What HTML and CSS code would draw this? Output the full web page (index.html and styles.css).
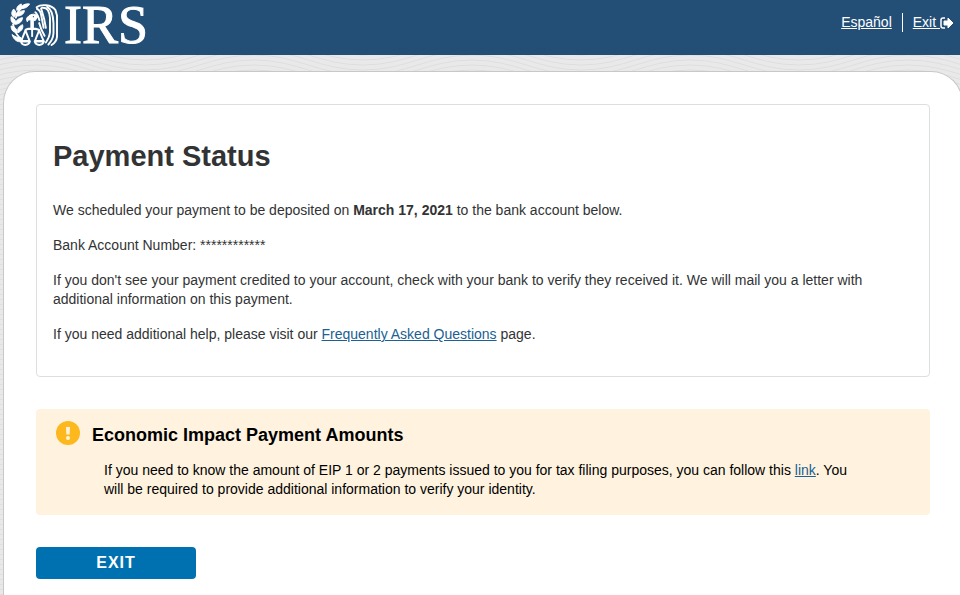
FILE: index.html
```html
<!DOCTYPE html>
<html lang="en">
<head>
<meta charset="utf-8">
<title>Payment Status</title>
<link rel="stylesheet" href="styles.css">
</head>
<body>
<svg class="wave-backdrop" aria-hidden="true">
  <defs>
    <pattern id="waves" x="36" y="0" width="218" height="5" patternUnits="userSpaceOnUse">
      <g fill="none" stroke="#dedede">
        <path d="M0-20C44-20 65 0 109 0S174-20 218-20"/>
        <path d="M0-15C44-15 65 5 109 5S174-15 218-15"/>
        <path d="M0-10C44-10 65 10 109 10S174-10 218-10"/>
        <path d="M0-5C44-5 65 15 109 15S174-5 218-5"/>
        <path d="M0 0C44 0 65 20 109 20S174 0 218 0"/>
        <path d="M0 5C44 5 65 25 109 25S174 5 218 5"/>
      </g>
    </pattern>
  </defs>
  <rect width="100%" height="100%" fill="url(#waves)"/>
</svg>
<header class="site-header">
  <div class="brand">
    <svg class="emblem" viewBox="0 0 156 138" aria-hidden="true">
      <g fill="#fff" stroke="#fff" stroke-width="3" stroke-linejoin="round">
        <path d="M35 3C25 7 19 14 21 23C31 20 37 12 35 3Z"/>
        <path d="M61 3C47 1 36 8 30 17C43 19 55 14 61 3Z"/>
        <path d="M11 19C3 29 3 37 12 45C21 35 19 27 11 19Z"/>
        <path d="M45 24C31 24 21 31 19 41C33 42 43 35 45 24Z"/>
        <path d="M3 43C1 56 6 64 16 67C20 57 14 48 3 43Z"/>
        <path d="M39 46C25 48 16 56 17 67C30 65 38 57 39 46Z"/>
        <path d="M3 72C3 85 10 93 23 93C22 82 14 74 3 72Z"/>
        <path d="M39 68C27 73 21 82 25 93C37 87 42 78 39 68Z"/>
        <path d="M6 99C11 115 22 124 36 121L33 109C24 109 16 106 6 99Z"/>
        <path d="M54 45C60 37 70 33 80 36L90 42L84 46L80 54L73 56V82H65V53H57L54 59C50 53 51 48 54 45Z"/>
      </g>
      <g fill="none" stroke="#fff" stroke-width="6" stroke-linejoin="round" stroke-linecap="round">
        <path d="M9 67C14 89 20 105 36 113"/>
        <path d="M18 46C21 27 34 13 54 6"/>
        <path d="M49 84L57 81H80L90 84" stroke-width="7"/>
        <path d="M69 81V104"/>
        <path d="M48 86L35 119H61Z"/><path d="M34 121C37 135 58 135 62 121Z"/>
        <path d="M91 86L78 119H105Z"/><path d="M77 121C81 135 102 135 106 121Z"/>
        <path d="M84 18C94 22 97 32 98 41L105 78M79 29C85 33 88 43 92 54"/>
        <path d="M97 17C102 33 108 48 112 78"/>
        <path d="M83 13C96 3 130 4 142 22L147 39V106C146 117 140 125 130 132"/>
        <path d="M100 15C118 13 123 27 125 47V91C124 106 118 115 112 124"/>
        <path d="M116 12C132 20 135 39 136 63V95C135 109 129 121 120 130"/>
        <path d="M91 63C95 79 101 91 108 103"/>
      </g>
      <circle cx="73" cy="43" r="2" fill="#234f77"/>
    </svg>
    <span class="brand-name">IRS</span>
  </div>
  <nav class="utility-nav" aria-label="Utility">
    <a class="utility-link" href="#">Español</a>
    <a class="utility-link utility-exit" href="#">Exit <svg class="exit-icon" viewBox="0 0 14 12" aria-hidden="true"><path d="M5 1H3Q1 1 1 3V9Q1 11 3 11H5" fill="none" stroke="#fff" stroke-width="1.5"/><path d="M4 4H8V1L13 6L8 11V8H4Z" fill="#fff" stroke="#fff" stroke-linejoin="round"/></svg></a>
  </nav>
</header>
<main class="page-card">
  <section class="status-panel">
    <h1>Payment Status</h1>
    <p>We scheduled your payment to be deposited on <strong>March 17, 2021</strong> to the bank account below.</p>
    <p>Bank Account Number: ************</p>
    <p>If you don't see your payment credited to your account, check with your bank to verify they received it. We will mail you a letter with additional information on this payment.</p>
    <p>If you need additional help, please visit our <a href="#">Frequently Asked Questions</a> page.</p>
  </section>
  <section class="notice">
    <svg class="notice-icon" viewBox="0 0 24 24" aria-hidden="true"><circle cx="12" cy="12" r="12" fill="#fdb81e"/><path d="M10 6H14L13.6 13.5H10.4Z" fill="#fff3df"/><circle cx="12" cy="17" r="2" fill="#fff3df"/></svg>
    <div class="notice-body">
      <h2>Economic Impact Payment Amounts</h2>
      <p>If you need to know the amount of EIP 1 or 2 payments issued to you for tax filing purposes, you can follow this <a href="#">link</a>. You will be required to provide additional information to verify your identity.</p>
    </div>
  </section>
  <button class="exit-button" type="button">EXIT</button>
</main>
</body>
</html>
```
FILE: styles.css
```css
* { box-sizing: border-box; }

body {
  position: relative;
  margin: 0;
  min-height: 100vh;
  overflow-x: hidden;
  color: #323334;
  font: 14px/19px "Liberation Sans", Arial, sans-serif;
  background: #e9e9e9;
}

a { color: #205f91; }

.wave-backdrop {
  position: absolute;
  inset: 0;
  z-index: -1;
  width: 100%;
  height: 100%;
}

.site-header {
  display: flex;
  justify-content: space-between;
  align-items: flex-start;
  height: 55px;
  padding: 0 6px 0 10px;
  background: #234f77;
  color: #fff;
}

.brand {
  display: flex;
  align-items: center;
  gap: 4px;
  height: 50px;
}

.emblem { width: 50px; height: 44px; }

.brand-name {
  font: 54px/55px "Liberation Serif", "Times New Roman", serif;
  -webkit-text-stroke: 1px #fff;
}

.utility-nav { display: flex; padding-top: 13px; }

.utility-link { color: #fff; line-height: 19px; }

.utility-exit {
  margin-left: 10px;
  padding-left: 10px;
  border-left: 1px solid #fff;
}

.exit-icon { width: 14px; height: 12px; vertical-align: -2px; }

.page-card {
  margin: 16px -3px 0 3px;
  padding: 32px 32px 16px;
  border: 1px solid #c8c8c8;
  border-bottom: 0;
  border-radius: 32px 32px 0 0;
  background: #fff;
}

.status-panel {
  padding: 32px 16px;
  border: 1px solid #dcdee0;
  border-radius: 4px;
}

.status-panel h1 {
  margin: 0 0 26px;
  font-size: 29px;
  line-height: 38px;
}

.status-panel p { margin: 0 0 16px; }

.status-panel p:last-child { margin: 0; }

.notice {
  display: flex;
  gap: 12px;
  margin: 32px 0;
  padding: 12px 60px 16px 20px;
  border-radius: 4px;
  background: #fff3df;
  color: #000;
}

.notice-icon { flex: none; width: 24px; height: 24px; }

.notice h2 { margin: 0; font-size: 18px; line-height: 28px; }

.notice p { margin: 12px 0 0 12px; }

.exit-button {
  display: block;
  width: 160px;
  height: 32px;
  padding: 0;
  border: 0;
  border-radius: 4px;
  background: #0071b0;
  color: #fff;
  font: bold 16px/32px "Liberation Sans", Arial, sans-serif;
  letter-spacing: 1px;
}
```
